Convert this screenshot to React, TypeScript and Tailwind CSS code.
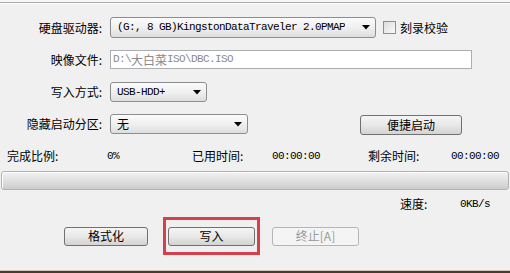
import React from "react";

const cjk = '"Noto Sans CJK SC", "Liberation Sans", sans-serif';

function Arrow() {
  return (
    <svg width="8" height="5" viewBox="0 0 8 5" className="shrink-0">
      <path d="M0 0 H8 L4 4.5 Z" fill="#000" />
    </svg>
  );
}

function Select({ w, text, mono = true }: { w: string; text: string; mono?: boolean }) {
  return (
    <div
      className={`${w} h-full flex items-center justify-between rounded-[3px] border border-[#8b8d8f] bg-gradient-to-b from-[#fbfbfb] via-[#f0f0f0] to-[#dedede] pl-[6px] pr-[5px] text-black`}
    >
      <span
        className={mono ? "font-['Liberation_Mono',monospace] text-[11px] tracking-[-0.6px] whitespace-nowrap overflow-hidden" : "text-[12px] whitespace-nowrap"}
      >
        {text}
      </span>
      <Arrow />
    </div>
  );
}

function Btn({ w, children, disabled = false }: { w: string; children: React.ReactNode; disabled?: boolean }) {
  return (
    <div
      className={`${w} h-[19px] flex items-center justify-center rounded-[3px] border ${
        disabled
          ? "border-[#b5b5b5] bg-[#f4f4f4] text-[#9a9a9a]"
          : "border-[#707070] bg-gradient-to-b from-[#f5f5f5] via-[#e8e8e8] to-[#d3d3d3] text-black"
      } text-[12px] leading-none`}
    >
      {children}
    </div>
  );
}

export default function App() {
  return (
    <div
      className="w-[510px] h-[273px] bg-[#f0f0f0] flex flex-col overflow-hidden text-black"
      style={{ fontFamily: cjk }}
    >
      {/* top separator */}
      <div className="h-[2px] bg-[#f7f7f7]" />
      <div className="h-px bg-[#a7a7a7]" />
      <div className="h-px bg-white" />

      {/* row 1 */}
      <div className="mt-[13px] h-[21px] flex items-center">
        <div className="w-[110px] pr-[8px] text-right text-[12px] leading-none">硬盘驱动器:</div>
        <Select w="w-[266px]" text="(G:, 8 GB)KingstonDataTraveler 2.0PMAP" />
        <div className="ml-[7px] w-[13px] h-[13px] border border-[#8f8f8f] bg-gradient-to-br from-[#dcdcdc] to-[#fafafa]" />
        <div className="ml-[4px] text-[12px] leading-none">刻录校验</div>
      </div>

      {/* row 2 */}
      <div className="mt-[12px] h-[19px] flex items-center">
        <div className="w-[110px] pr-[8px] text-right text-[12px] leading-none">映像文件:</div>
        <div className="w-[362px] h-full flex items-center border border-[#abadb3] bg-white pl-[2px] text-[#8a8a8a] text-[12px] leading-none whitespace-nowrap">
          <span className="font-['Liberation_Mono',monospace] text-[11px] tracking-[-0.6px]">D:\</span>
          <span>大白菜</span>
          <span className="font-['Liberation_Mono',monospace] text-[11px] tracking-[-0.6px]">ISO\DBC.ISO</span>
        </div>
      </div>

      {/* row 3 */}
      <div className="mt-[13px] h-[20px] flex items-center">
        <div className="w-[110px] pr-[8px] text-right text-[12px] leading-none">写入方式:</div>
        <Select w="w-[97px]" text="USB-HDD+" />
      </div>

      {/* row 4 */}
      <div className="mt-[12px] h-[21px] flex items-start">
        <div className="w-[110px] h-[20px] pr-[8px] flex items-center justify-end text-[12px] leading-none">隐藏启动分区:</div>
        <div className="h-[20px] flex">
          <Select w="w-[138px]" text="无" mono={false} />
        </div>
        <div className="ml-[112px] mt-px">
          <div className="w-[102px] h-[20px] flex items-center justify-center rounded-[3px] border border-[#707070] bg-gradient-to-b from-[#f5f5f5] via-[#e8e8e8] to-[#d3d3d3] text-[12px] leading-none">
            便捷启动
          </div>
        </div>
      </div>

      {/* row 5 status */}
      <div className="mt-[13px] h-[16px] flex items-center pl-[7px] text-[12px] leading-none whitespace-nowrap">
        <div className="w-[100px]">完成比例:</div>
        <div className="w-[85px] font-['Liberation_Mono',monospace] text-[11px] tracking-[-0.6px]">0%</div>
        <div className="w-[80px]">已用时间:</div>
        <div className="w-[96px] font-['Liberation_Mono',monospace] text-[11px] tracking-[-0.6px]">00:00:00</div>
        <div className="w-[83px]">剩余时间:</div>
        <div className="font-['Liberation_Mono',monospace] text-[11px] tracking-[-0.6px]">00:00:00</div>
      </div>

      {/* progress bar */}
      <div className="mt-[7px] mx-[1px] h-[19px] rounded-[3px] border border-[#b2b2b2] bg-gradient-to-b from-[#f3f3f3] via-[#e0e0e0] to-[#cdcdcd] shadow-[inset_1px_1px_0_#ffffff]" />

      {/* speed */}
      <div className="mt-[7px] h-[14px] flex items-center text-[12px] leading-none">
        <div className="ml-[400px] w-[60px]">速度:</div>
        <div className="font-['Liberation_Mono',monospace] text-[11px] tracking-[-0.6px]">0KB/s</div>
      </div>

      {/* buttons */}
      <div className="mt-[6px] h-[38px] flex items-center pl-[64px]">
        <Btn w="w-[84px]">格式化</Btn>
        <div className="ml-[15px] w-[97px] h-[38px] border-[3px] border-[#d6404a] flex items-center justify-center">
          <Btn w="w-[87px]">写入</Btn>
        </div>
        <div className="ml-[12px]">
          <Btn w="w-[87px]" disabled>
            终止[A]
          </Btn>
        </div>
      </div>

      {/* bottom border */}
      <div className="mt-auto h-px bg-[#cfc6bb]" />
      <div className="h-[2px] bg-[#4a3a2c]" />
    </div>
  );
}
